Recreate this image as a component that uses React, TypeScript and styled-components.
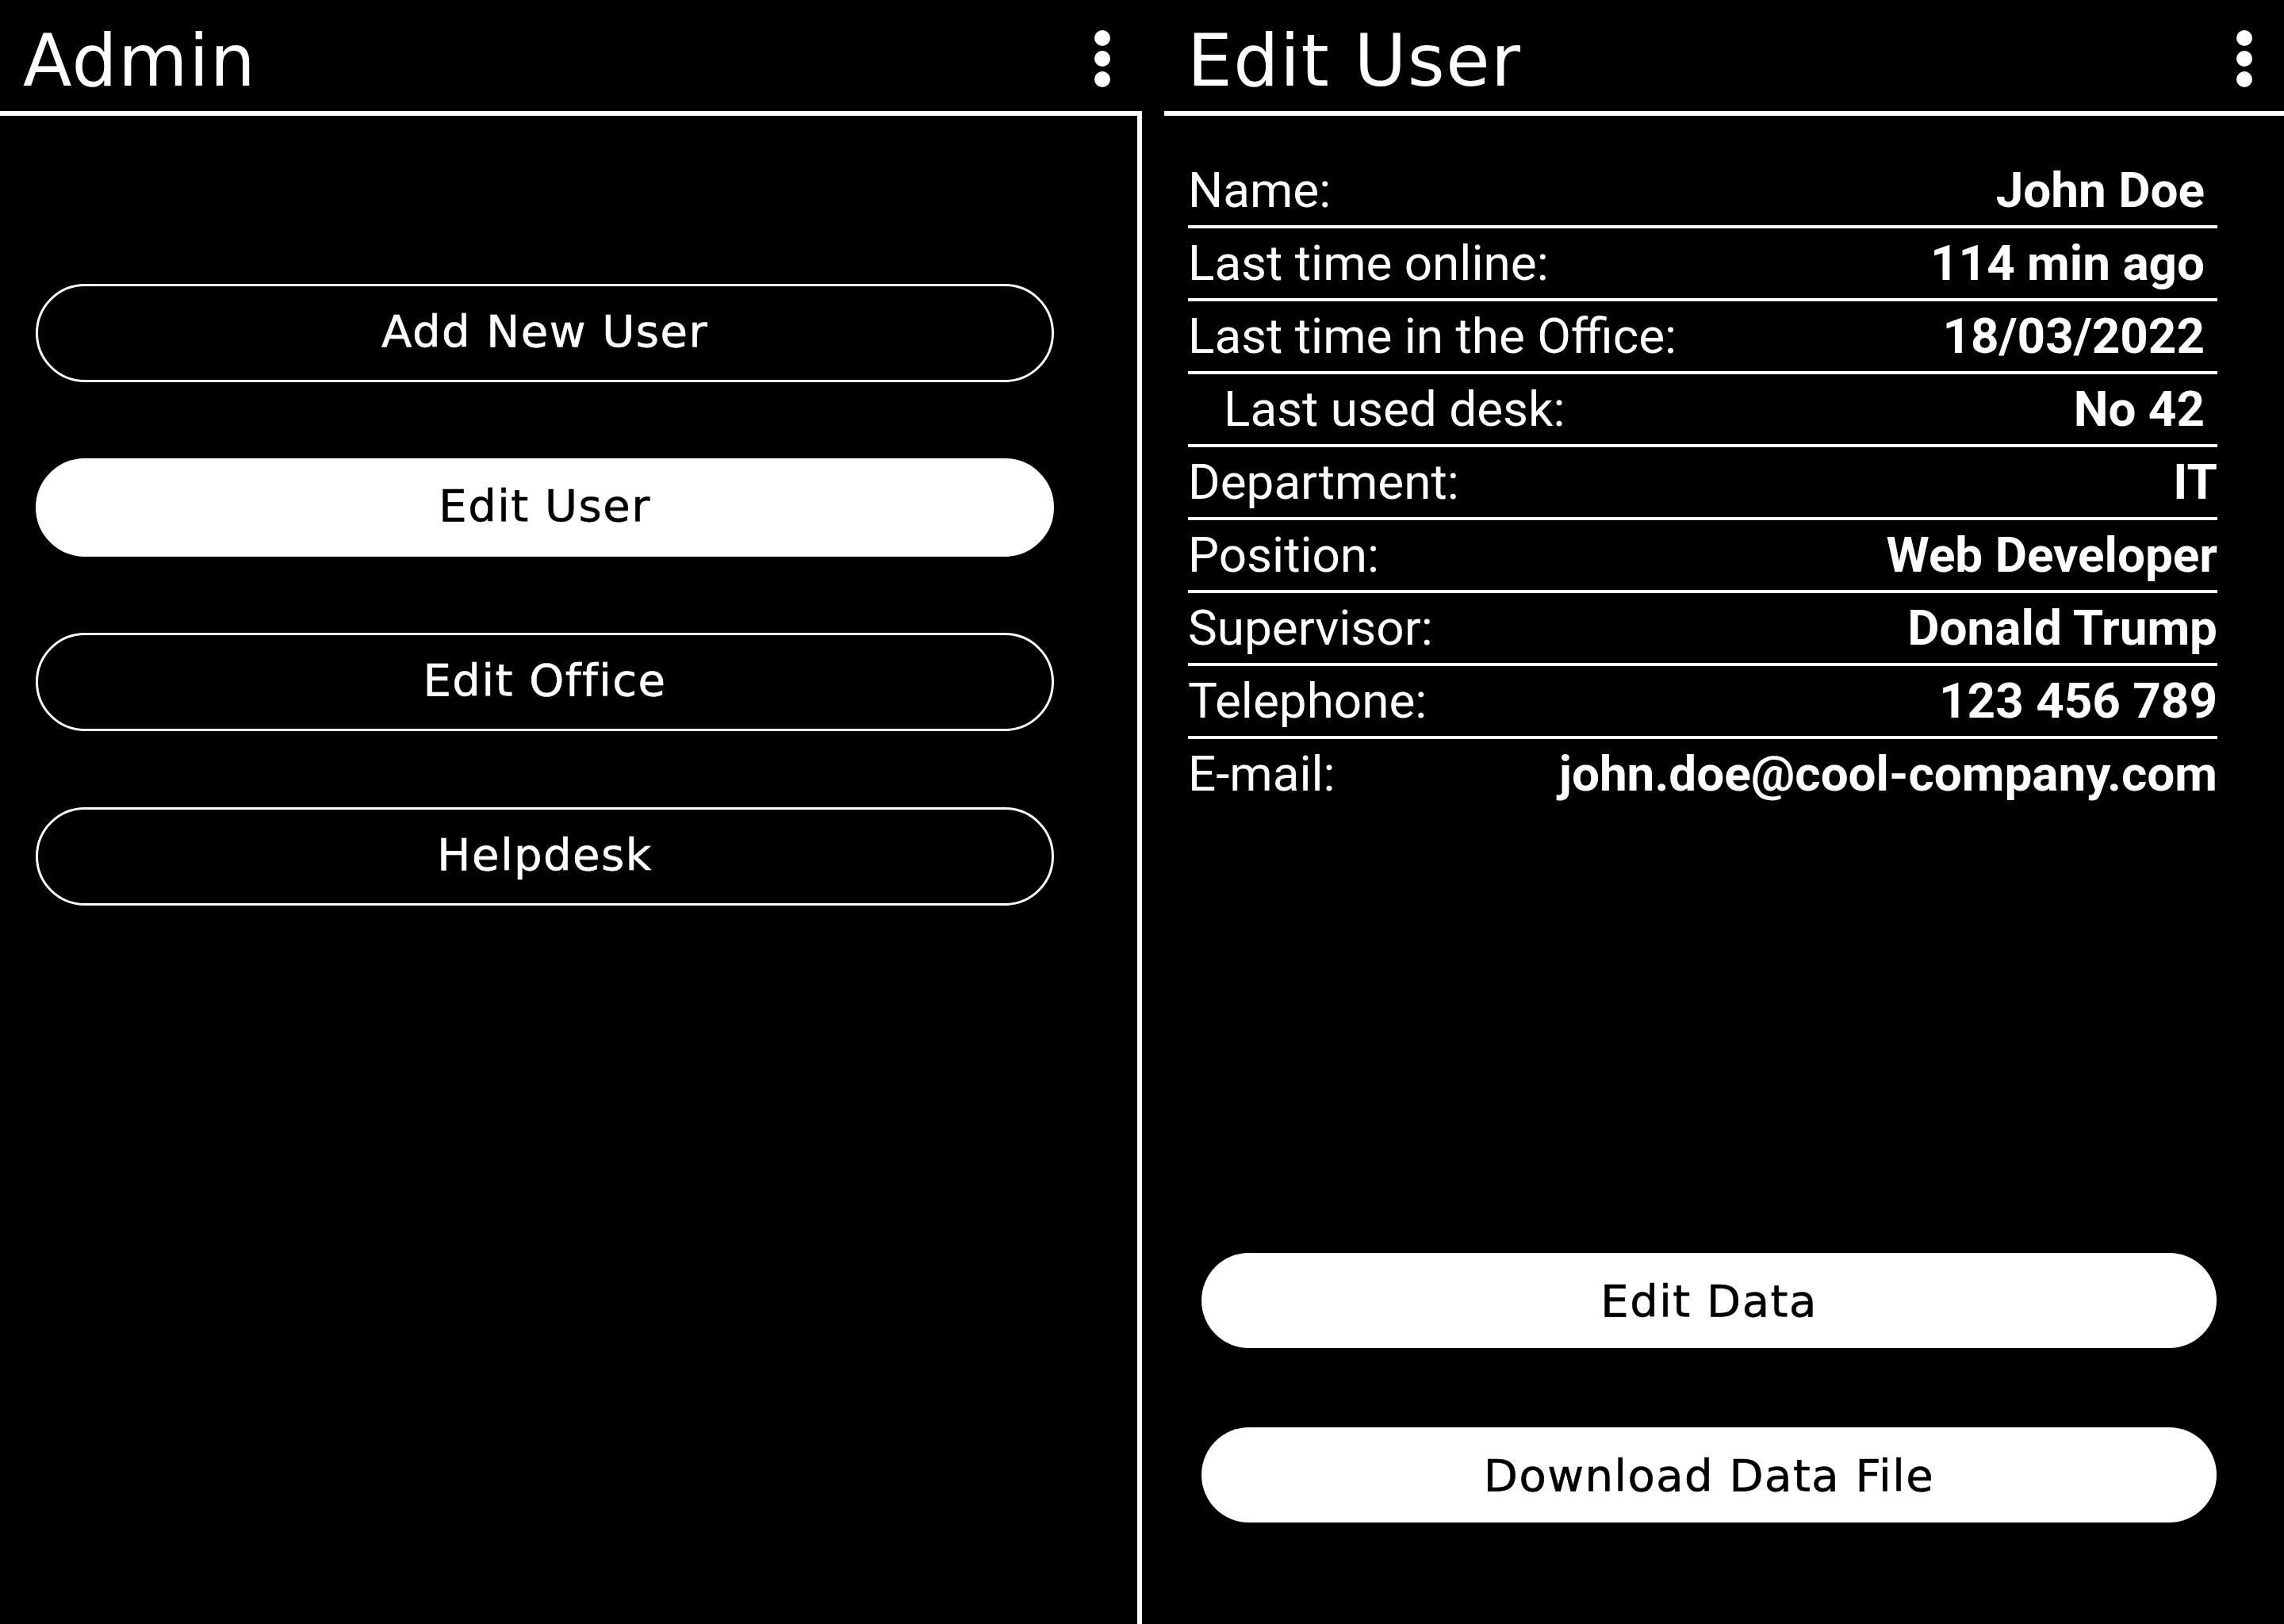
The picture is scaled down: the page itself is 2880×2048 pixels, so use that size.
import React from "react";
import styled, { createGlobalStyle } from "styled-components";

const GlobalStyle = createGlobalStyle`
  html, body, #root {
    margin: 0;
    padding: 0;
    height: 100%;
    background: #000;
  }
  * { box-sizing: border-box; }
`;

const Screen = styled.div`
  display: flex;
  height: 100vh;
  background: #000;
  color: #fff;
`;

const LeftPanel = styled.section`
  display: flex;
  flex-direction: column;
  width: 1440px;
  flex-shrink: 0;
`;

const RightPanel = styled.section`
  display: flex;
  flex-direction: column;
  flex: 1;
  margin-left: 28px;
`;

const Header = styled.header`
  display: flex;
  align-items: flex-start;
  justify-content: space-between;
  height: 146px;
  padding: 0 40px 0 29px;
  border-bottom: 6px solid #fff;
`;

const Title = styled.h1`
  margin: 32px 0 0 0;
  font-family: "DejaVu Sans", sans-serif;
  font-weight: 400;
  font-size: 90px;
  line-height: 90px;
  letter-spacing: 1.5px;
  color: #fff;
`;

const MenuButton = styled.button`
  margin-top: 38px;
  padding: 0;
  width: 20px;
  height: 72px;
  background: none;
  border: none;
  display: block;
  cursor: pointer;
`;

const MenuDots = () => (
  <svg width="20" height="72" viewBox="0 0 20 72">
    <circle cx="10" cy="10" r="10" fill="#fff" />
    <circle cx="10" cy="36" r="10" fill="#fff" />
    <circle cx="10" cy="62" r="10" fill="#fff" />
  </svg>
);

const NavBody = styled.nav`
  flex: 1;
  display: flex;
  flex-direction: column;
  gap: 96px;
  padding: 212px 105px 0 45px;
  border-right: 6px solid #fff;
`;

const PillButton = styled.button<{ $filled?: boolean }>`
  display: flex;
  align-items: center;
  justify-content: center;
  height: 120px;
  width: 100%;
  border-radius: 62px;
  border: ${(p) => (p.$filled ? "none" : "3px solid #fff")};
  background: ${(p) => (p.$filled ? "#fff" : "#000")};
  color: ${(p) => (p.$filled ? "#000" : "#fff")};
  font-family: "DejaVu Sans", sans-serif;
  font-size: 56px;
  letter-spacing: 1.5px;
  padding: 0;
  cursor: pointer;
  -webkit-text-stroke: ${(p) => (p.$filled ? "0.6px #000" : "0.6px #fff")};
`;

const NavButton = styled(PillButton)`
  height: 124px;
  border: 3px solid #fff;
  padding-bottom: 5px;
`;

const DetailBody = styled.div`
  flex: 1;
  display: flex;
  flex-direction: column;
  padding: 50px 84px 0 30px;
`;

const Table = styled.dl`
  margin: 0;
  display: flex;
  flex-direction: column;
`;

const Row = styled.div`
  display: flex;
  align-items: center;
  justify-content: space-between;
  height: 92px;
  border-bottom: 4px solid #fff;
  font-family: Roboto, sans-serif;
  font-size: 62px;
  padding-bottom: 2px;

  &:last-child {
    height: 88px;
    border-bottom: none;
  }
`;

const Label = styled.dt<{ $indent?: boolean }>`
  margin: 0;
  font-weight: 400;
  padding-left: ${(p) => (p.$indent ? "45px" : "0")};
`;

const Value = styled.dd<{ $inset?: boolean }>`
  margin: 0;
  font-weight: 700;
  padding-right: ${(p) => (p.$inset ? "16px" : "0")};
`;

const Actions = styled.div`
  display: flex;
  flex-direction: column;
  gap: 100px;
  margin: 560px 1px 0 17px;
`;

const rows = [
  { label: "Name:", value: "John Doe", inset: true },
  { label: "Last time online:", value: "114 min ago", inset: true },
  { label: "Last time in the Office:", value: "18/03/2022", inset: true },
  { label: "Last used desk:", value: "No 42", inset: true, indent: true },
  { label: "Department:", value: "IT" },
  { label: "Position:", value: "Web Developer" },
  { label: "Supervisor:", value: "Donald Trump" },
  { label: "Telephone:", value: "123 456 789" },
  { label: "E-mail:", value: "john.doe@cool-company.com" },
];

const navItems = [
  { label: "Add New User" },
  { label: "Edit User", active: true },
  { label: "Edit Office" },
  { label: "Helpdesk" },
];

export default function App() {
  return (
    <>
      <GlobalStyle />
      <Screen>
        <LeftPanel>
          <Header>
            <Title>Admin</Title>
            <MenuButton aria-label="menu">
              <MenuDots />
            </MenuButton>
          </Header>
          <NavBody>
            {navItems.map((item) => (
              <NavButton key={item.label} $filled={item.active}>
                {item.label}
              </NavButton>
            ))}
          </NavBody>
        </LeftPanel>
        <RightPanel>
          <Header>
            <Title>Edit User</Title>
            <MenuButton aria-label="menu">
              <MenuDots />
            </MenuButton>
          </Header>
          <DetailBody>
            <Table>
              {rows.map((r) => (
                <Row key={r.label}>
                  <Label $indent={r.indent}>{r.label}</Label>
                  <Value $inset={r.inset}>{r.value}</Value>
                </Row>
              ))}
            </Table>
            <Actions>
              <PillButton $filled>Edit Data</PillButton>
              <PillButton $filled>Download Data File</PillButton>
            </Actions>
          </DetailBody>
        </RightPanel>
      </Screen>
    </>
  );
}
